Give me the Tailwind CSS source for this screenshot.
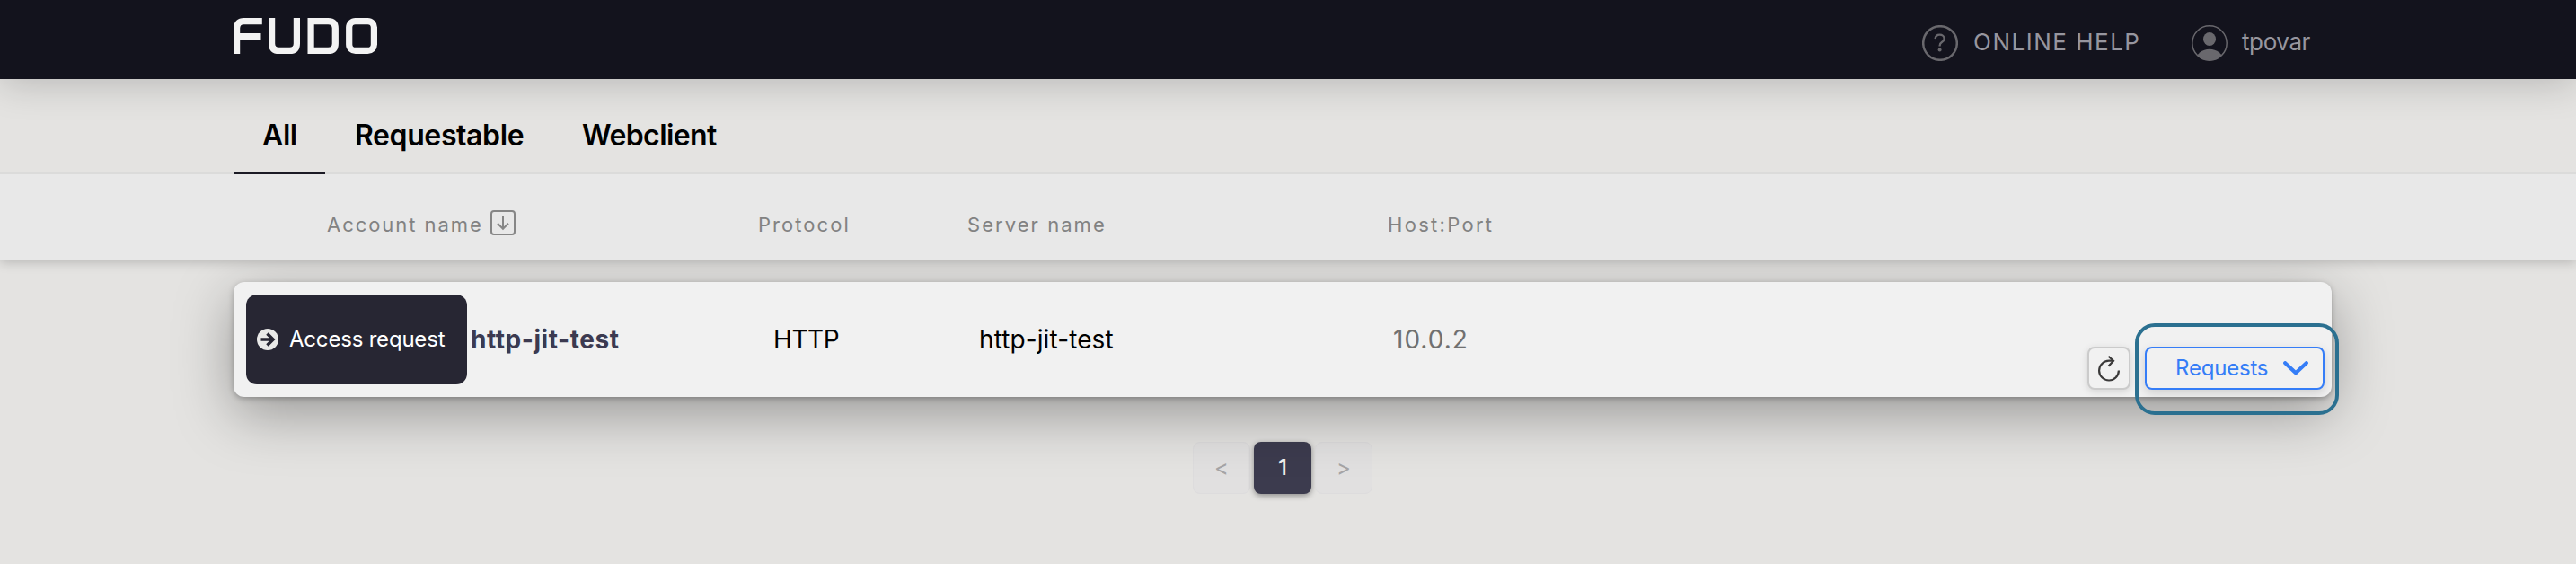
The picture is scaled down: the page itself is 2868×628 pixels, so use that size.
<!DOCTYPE html>
<html lang="en">
<head>
<meta charset="utf-8">
<title>Fudo</title>
<script src="https://cdn.jsdelivr.net/npm/@tailwindcss/browser@4"></script>
</head>
<body class="min-h-[628px] overflow-hidden bg-[#e4e3e1] font-['Inter','Liberation_Sans',sans-serif] text-black">
<header class="relative z-10 flex h-[88px] items-start bg-[#13131d] pl-[260px] shadow-[0_4px_44px_rgba(0,0,0,0.2)]">
  <svg class="mt-5 h-10 w-40 shrink-0" viewBox="0 0 160 40" fill="none" stroke="#f3f3f3" stroke-width="7.2" aria-label="FUDO">
    <path d="M3.6 40V11.6Q3.6 3.6 11.6 3.6H31.8M3.6 20.6H30.5"/>
    <path d="M42.6 0V28.4Q42.6 36.4 50.6 36.4H62.4Q70.4 36.4 70.4 28.4V0"/>
    <path d="M86.1 3.6H105.3Q113.3 3.6 113.3 11.6V28.4Q113.3 36.4 105.3 36.4H86.1Z"/>
    <rect x="128.7" y="3.6" width="27.7" height="32.8" rx="7"/>
  </svg>
  <div class="ml-[1720px] flex h-24 items-center">
    <svg class="size-10" viewBox="0 0 40 40" fill="none" stroke="#69686d"><circle cx="20" cy="20" r="18.8" stroke-width="2.5"/><path d="M14.6 15.2c.2-3 2.3-4.6 5-4.600s5 1.700 5 4.300c0 2.200-1.300 3.200-2.700 4.100-1.600 1-2.300 2-2.300 3.900v.6" stroke-width="2.300"/><circle cx="19.600" cy="27.600" r="2" fill="#69686d" stroke="none"/></svg>
    <span class="ml-[17px] -mt-[3px] w-[243px] text-[26px] tracking-[1.5px] text-[#97969f]">ONLINE HELP</span>
    <svg class="size-10" viewBox="0 0 40 40"><defs><clipPath id="avatar"><circle cx="20" cy="20" r="19.500"/></clipPath></defs><g clip-path="url(#avatar)" fill="#69686d"><ellipse cx="20" cy="15.500" rx="7" ry="7.600"/><ellipse cx="20" cy="39" rx="15" ry="12.300"/></g><circle cx="20" cy="20" r="19.200" fill="none" stroke="#69686d" stroke-width="1.500"/></svg>
    <span class="ml-4 -mt-[3px] text-[26px] tracking-[-0.4px] text-[#97969f]">tpovar</span>
  </div>
</header>
<nav class="relative z-[2] flex h-[106px] border-b-2 border-[#dbdbda] bg-[#e4e3e1] pl-[260px] text-[32px] font-semibold">
  <div class="-mb-[2px] flex w-[102px] items-center border-b-2 border-[#1b1a24] pl-8 pt-[22px] tracking-[-0.4px]">All</div>
  <div class="flex w-[253px] items-center pl-[33px] pt-[22px] tracking-[-0.4px]">Requestable</div>
  <div class="flex items-center pl-[33px] pt-[22px] tracking-[-0.6px]">Webclient</div>
</nav>
<section class="relative z-[1] flex h-24 items-center bg-[#e8e8e8] pl-[364px] pt-4 text-[22px] tracking-[2.05px] text-[#828282] shadow-[0_2px_12px_rgba(0,0,0,0.2)]">
  <div class="flex w-[480px] items-center"><span class="w-[182px] tracking-[1.95px]">Account name</span>
    <svg class="-mt-1 size-7" viewBox="0 0 28 28" fill="none" stroke="#868686" stroke-width="2"><rect x="1" y="1" width="26" height="26" rx="3"/><path d="M14 6.500V20.500M8 14.800l6 6 6-6"/></svg></div>
  <div class="w-[233px]">Protocol</div>
  <div class="w-[468px]">Server name</div>
  <div class="tracking-[2.3px]">Host:Port</div>
</section>
<main class="pl-[260px] pt-6">
  <div class="relative flex h-32 w-[2336px] items-center rounded-xl bg-[#f1f1f1] pl-[14px] text-[28px] shadow-[0_2px_6px_rgba(0,0,0,0.26),0_18px_64px_rgba(0,0,0,0.34)]">
    <button class="flex h-[100px] w-[246px] items-center rounded-xl bg-[#272633] pl-3 text-2xl text-white">
      <svg class="size-6" viewBox="0 0 24 24"><circle cx="12" cy="12" r="12" fill="#e9e9e8"/><path d="M4.500 12H17M11.500 5.500L18 12L11.500 18.500" fill="none" stroke="#272633" stroke-width="3.600"/></svg>
      <span class="ml-3 tracking-[-0.2px]">Access request</span>
    </button>
    <div class="w-[341px] pl-1 font-bold tracking-[0.55px] text-[#3c3a50]">http-jit-test</div>
    <div class="w-[229px] tracking-[-0.4px]">HTTP</div>
    <div class="w-[461px] tracking-[0.1px]">http-jit-test</div>
    <div class="tracking-[1px] text-[#707070]">10.0.2</div>
    <div class="absolute bottom-2 right-2 flex gap-4 text-2xl">
      <button class="flex size-12 items-center justify-center rounded-lg border-2 border-[#cbcbcb] bg-[#f1f1f1] shadow-[0_2px_8px_rgba(0,0,0,0.12)]">
        <svg class="h-[30px] w-6" viewBox="0 0 24 30" fill="none" stroke="#3b3a3a" stroke-width="2.200"><path d="M22.900 17.500A10.900 10.900 0 1 1 12 6.700H17"/><path d="M11.500 1.800L17 6.800L11.500 12.800"/></svg>
      </button>
      <button class="flex h-12 w-[200px] items-center rounded-lg border-2 border-[#357df7] bg-[#f1f1f1] pl-8 text-[#357df7] shadow-[0_4px_12px_rgba(0,0,0,0.14)]"><span class="w-[120px] text-left tracking-[-0.2px]">Requests</span>
        <svg class="h-4 w-7" viewBox="0 0 28 16" fill="none" stroke="#357df7" stroke-width="4.200" stroke-linecap="round" stroke-linejoin="round"><path d="M2.200 2.200L14 13.300L25.800 2.200"/></svg>
      </button>
    </div>
    <div class="pointer-events-none absolute left-[2117px] top-[46px] h-[102px] w-[227px] rounded-[22px] border-4 border-[#2b7090]"></div>
  </div>
  <div class="ml-[1068px] mt-[50px] flex h-[58px] w-[200px] gap-1 text-2xl">
    <button class="w-16 rounded-lg border border-[#dddcdd] bg-[#e0dfe0]/80 text-[#a6a5a6]">&lt;</button>
    <button class="w-16 rounded-lg bg-[#3c3b4e] font-medium text-[#f1f1f1] shadow-[0_2px_6px_rgba(0,0,0,0.4)]">1</button>
    <button class="w-16 rounded-lg border border-[#dddcdd] bg-[#e0dfe0]/80 text-[#a6a5a6]">&gt;</button>
  </div>
</main>
</body>
</html>
